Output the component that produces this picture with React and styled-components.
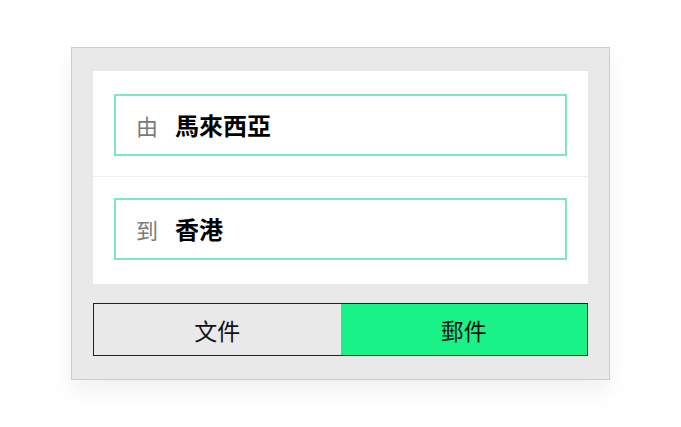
import React, { useState } from 'react';
import styled, { createGlobalStyle } from 'styled-components';

const GlobalStyle = createGlobalStyle`
  html, body {
    margin: 0;
    padding: 0;
    background: #fff;
    font-family: "Noto Sans CJK TC", "Noto Sans", sans-serif;
  }
`;

const places = [
  { label: '由', value: '馬來西亞' },
  { label: '到', value: '香港' },
];

const types = ['文件', '郵件'];

export default function App() {
  const [active, setActive] = useState(1);
  return (
    <Page>
      <GlobalStyle />
      <Card>
        <Panel>
          {places.map((p, i) => (
            <Row key={p.label} $first={i === 0}>
              <Field>
                <Label>{p.label}</Label>
                <Value>{p.value}</Value>
              </Field>
            </Row>
          ))}
        </Panel>
        <Toggle>
          {types.map((t, i) => (
            <ToggleButton key={t} $active={active === i} onClick={() => setActive(i)}>
              {t}
            </ToggleButton>
          ))}
        </Toggle>
      </Card>
    </Page>
  );
}

const Page = styled.div`
  min-height: 100vh;
  display: flex;
  align-items: center;
  justify-content: center;
`;

const Card = styled.div`
  box-sizing: border-box;
  width: 539px;
  padding: 23px 21px;
  background: #e9e9e9;
  border: 1px solid #cdcdcd;
  box-shadow: 0 12px 22px rgba(0, 0, 0, 0.06);
  display: flex;
  flex-direction: column;
  gap: 19px;
`;

const Panel = styled.div`
  background: #fff;
  display: flex;
  flex-direction: column;
`;

const Row = styled.div`
  padding: ${(p) => (p.$first ? '23px 21px 20px' : '21px 21px 24px')};
  border-top: ${(p) => (p.$first ? 'none' : '1px solid #ececec')};
`;

const Field = styled.div`
  box-sizing: border-box;
  height: 62px;
  border: 2px solid #80e6bb;
  display: flex;
  align-items: center;
  padding-left: 20px;
  gap: 17px;
`;

const Label = styled.span`
  font-size: 22px;
  color: #7a7a7a;
  line-height: 1;
`;

const Value = styled.span`
  font-size: 24px;
  font-weight: 700;
  color: #000;
  line-height: 1;
`;

const Toggle = styled.div`
  display: grid;
  grid-template-columns: 1fr 1fr;
  height: 53px;
  box-sizing: border-box;
  border: 1px solid #222;
`;

const ToggleButton = styled.button`
  border: none;
  margin: 0;
  padding: 0;
  font-family: inherit;
  font-size: 23px;
  font-weight: 400;
  color: #111;
  background: ${(p) => (p.$active ? '#19f286' : '#e9e9e9')};
  cursor: pointer;
`;
